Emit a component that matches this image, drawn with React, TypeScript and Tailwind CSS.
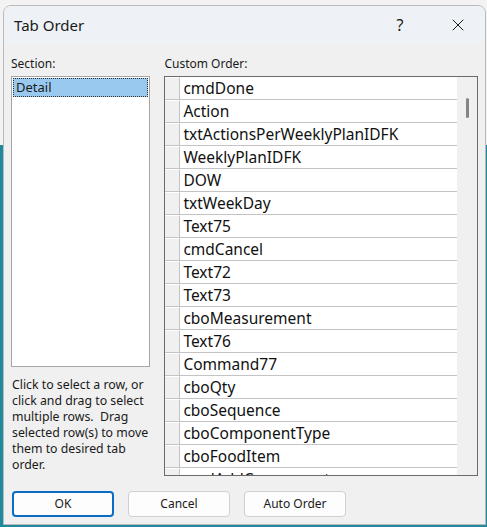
import { X } from 'lucide-react';

const rows = [
  'cmdDone',
  'Action',
  'txtActionsPerWeeklyPlanIDFK',
  'WeeklyPlanIDFK',
  'DOW',
  'txtWeekDay',
  'Text75',
  'cmdCancel',
  'Text72',
  'Text73',
  'cboMeasurement',
  'Text76',
  'Command77',
  'cboQty',
  'cboSequence',
  'cboComponentType',
  'cboFoodItem',
  'cmdAddComponent',
];

export default function App() {
  return (
    <div
      className="w-[487px] h-[527px] overflow-hidden pt-[5px] pl-[3px] bg-[linear-gradient(to_bottom,#f3f3f3_145px,#1e8a9c_145px)]"
      style={{ fontFamily: '"Noto Sans", "Open Sans", sans-serif' }}
    >
      <div className="w-[483px] h-[520px] rounded-t-[8px] border border-[#b9b9b9] bg-[#f0f0f0] flex flex-col overflow-hidden">
        {/* title bar */}
        <div className="h-[38px] shrink-0 bg-[#eef2f6] flex items-center pl-[10px] text-[#1a1a1a]">
          <span className="text-[15px] flex-1">Tab Order</span>
          <span className="w-[46px] text-center text-[16px] mr-[12px]">?</span>
          <span className="w-[46px] flex justify-center mr-[4px]">
            <X size={20} strokeWidth={1.2} />
          </span>
        </div>

        {/* body */}
        <div className="flex-1 flex px-[7px] pt-[12px] gap-[14px] text-[12px] text-[#1a1a1a]">
          {/* left column */}
          <div className="w-[140px] flex flex-col">
            <div className="h-[20px] leading-[16px]">Section:</div>
            <div className="h-[291px] border border-[#a6a6a6] bg-white p-[1px]">
              <div className="h-[19px] bg-[#99c9ef] border border-dotted border-[#333] leading-[16px] pl-[2px] text-[13px]">
                Detail
              </div>
            </div>
            <p className="mt-[10px] leading-[16px] pl-[1px] text-[12.3px]">
              Click to select a row, or click and drag to select multiple rows.&nbsp; Drag selected row(s) to move them to desired tab order.
            </p>
          </div>

          {/* right column */}
          <div className="w-[315px] flex flex-col">
            <div className="h-[20px] leading-[16px]">Custom Order:</div>
            <div className="h-[400px] border border-[#6b6b6b] flex overflow-hidden">
              <div className="w-[292px] bg-white flex flex-col">
                {rows.map((r) => (
                  <div key={r} className="h-[23px] shrink-0 flex border-b border-[#c4c4c4]">
                    <div className="w-[15px] bg-[#f0f0f0] border-r border-[#c4c4c4] border-t border-t-white" />
                    <div className="pl-[3px] text-[15.5px] leading-[22px] text-[#111] whitespace-nowrap">{r}</div>
                  </div>
                ))}
              </div>
              <div className="flex-1 bg-[#f0f0f0] flex justify-center pt-[21px]">
                <div className="w-[3px] h-[20px] rounded-full bg-[#858585]" />
              </div>
            </div>
          </div>
        </div>

        {/* buttons */}
        <div className="h-[33px] shrink-0 flex gap-[14px] pl-[8px] pb-[7px] text-[12px] text-[#1a1a1a]">
          <button className="w-[102px] h-[26px] rounded-[4px] border-2 border-[#0a6cc2] bg-[#fdfdfd]">OK</button>
          <button className="w-[102px] h-[26px] rounded-[4px] border border-[#d0d0d0] bg-[#fdfdfd]">Cancel</button>
          <button className="w-[102px] h-[26px] rounded-[4px] border border-[#d0d0d0] bg-[#fdfdfd]">Auto Order</button>
        </div>
      </div>
    </div>
  );
}
